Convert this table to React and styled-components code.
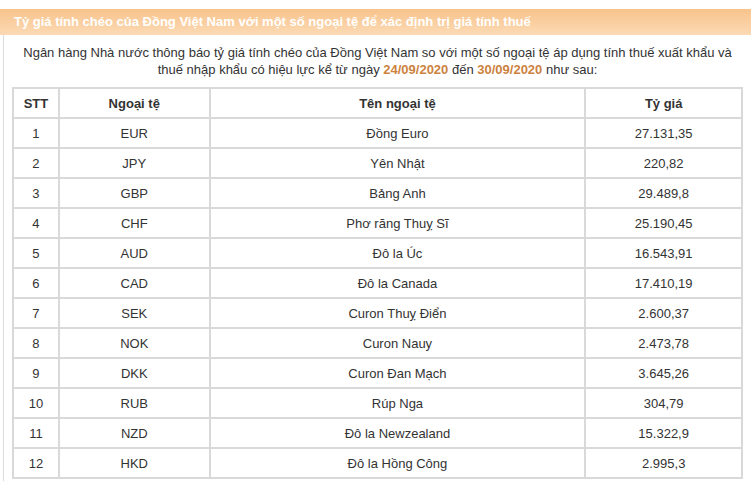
import React from 'react';
import styled, { createGlobalStyle } from 'styled-components';

const GlobalStyle = createGlobalStyle`
	body {
		margin: 0;
		padding: 0;
		background: #ffffff;
		font-family: 'Liberation Sans', Arial, sans-serif;
		overflow: hidden;
	}
`;

const Page = styled.div`
	padding-top: 9px;
	height: 100vh;
	box-sizing: border-box;
	display: flex;
	flex-direction: column;
`;

const TitleBar = styled.h2`
	margin: 0;
	height: 26px;
	line-height: 26px;
	padding-left: 14px;
	font-size: 13px;
	font-weight: bold;
	color: #ffffff;
	background: linear-gradient(to bottom, #f8c38b, #fcdab5);
`;

const Body = styled.div`
	flex: 1;
	margin-left: 3px;
	border-left: 1px solid #dcdcdc;
	padding: 9px 8px 0 8px;
`;

const Intro = styled.p`
	margin: 0 0 9px;
	padding: 0 10px;
	text-align: center;
	font-size: 13px;
	line-height: 17px;
	color: #333333;
`;

const DateMark = styled.span`
	color: #cd8240;
	font-weight: bold;
`;

const Table = styled.table`
	width: 731px;
	border-collapse: collapse;
	font-size: 13px;
	color: #333333;
`;

const Cell = styled.td`
	border: 2px solid #d9d9d9;
	height: 28px;
	padding: 0 6px;
	text-align: center;
	width: ${(p) => p.$w}px;
	font-weight: ${(p) => (p.$head ? 'bold' : 'normal')};
`;

const rates = [
	['EUR', 'Đồng Euro', '27.131,35'],
	['JPY', 'Yên Nhật', '220,82'],
	['GBP', 'Bảng Anh', '29.489,8'],
	['CHF', 'Phơ răng Thuỵ Sĩ', '25.190,45'],
	['AUD', 'Đô la Úc', '16.543,91'],
	['CAD', 'Đô la Canada', '17.410,19'],
	['SEK', 'Curon Thuỵ Điển', '2.600,37'],
	['NOK', 'Curon Nauy', '2.473,78'],
	['DKK', 'Curon Đan Mạch', '3.645,26'],
	['RUB', 'Rúp Nga', '304,79'],
	['NZD', 'Đô la Newzealand', '15.322,9'],
	['HKD', 'Đô la Hồng Công', '2.995,3'],
];

const widths = [32, 137, 363, 143];

const App = () => (
	<>
		<GlobalStyle />
		<Page>
			<TitleBar>
				Tỷ giá tính chéo của Đồng Việt Nam với một số ngoại tệ để xác định trị giá tính thuế
			</TitleBar>
			<Body>
				<Intro>
					Ngân hàng Nhà nước thông báo tỷ giá tính chéo của Đồng Việt Nam so với một số ngoại tệ áp
					dụng tính thuế xuất khẩu và thuế nhập khẩu có hiệu lực kể từ ngày{' '}
					<DateMark>24/09/2020</DateMark> đến <DateMark>30/09/2020</DateMark> như sau:
				</Intro>
				<Table>
					<tbody>
						<tr>
							{['STT', 'Ngoại tệ', 'Tên ngoại tệ', 'Tỷ giá'].map((h, i) => (
								<Cell key={h} $head $w={widths[i]}>
									{h}
								</Cell>
							))}
						</tr>
						{rates.map(([code, name, rate], i) => (
							<tr key={code}>
								<Cell $w={widths[0]}>{i + 1}</Cell>
								<Cell $w={widths[1]}>{code}</Cell>
								<Cell $w={widths[2]}>{name}</Cell>
								<Cell $w={widths[3]}>{rate}</Cell>
							</tr>
						))}
					</tbody>
				</Table>
			</Body>
		</Page>
	</>
);

export default App;
